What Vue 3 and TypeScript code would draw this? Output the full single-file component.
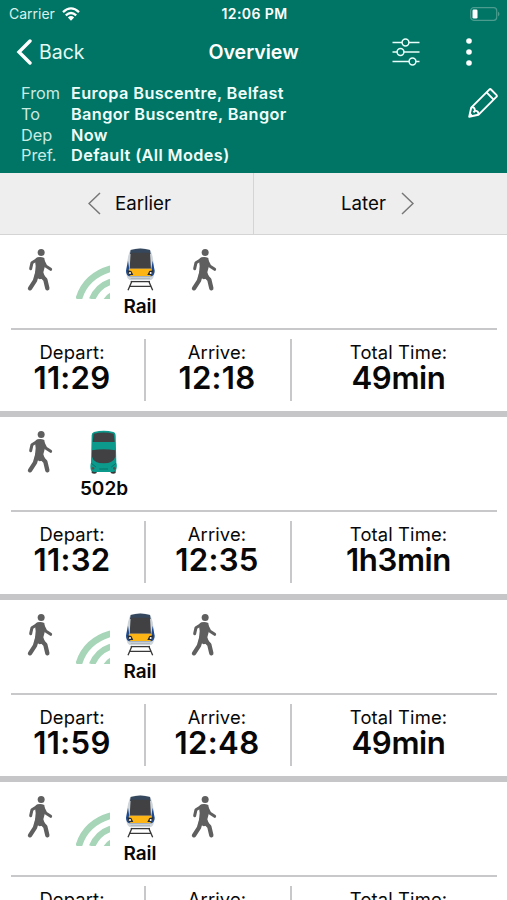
<script setup lang="ts">
type Mode = 'rail' | 'bus'

interface Journey {
  mode: Mode
  label: string
  depart: string
  arrive: string
  total: string
}

const query = [
  { key: 'From', value: 'Europa Buscentre, Belfast' },
  { key: 'To', value: 'Bangor Buscentre, Bangor' },
  { key: 'Dep', value: 'Now' },
  { key: 'Pref.', value: 'Default (All Modes)' },
]

const journeys: Journey[] = [
  { mode: 'rail', label: 'Rail', depart: '11:29', arrive: '12:18', total: '49min' },
  { mode: 'bus', label: '502b', depart: '11:32', arrive: '12:35', total: '1h3min' },
  { mode: 'rail', label: 'Rail', depart: '11:59', arrive: '12:48', total: '49min' },
  { mode: 'rail', label: 'Rail', depart: '12:29', arrive: '13:18', total: '49min' },
]
</script>

<template>
  <main class="screen">
    <svg class="defs" aria-hidden="true">
      <symbol id="walker" viewBox="48 24 81 132">
        <circle cx="93.500" cy="37.500" r="10.500" fill="#5f5f5f" />
        <g fill="none" stroke="#5f5f5f" stroke-linecap="round" stroke-linejoin="round">
          <path d="M84 57L66 68L62 86" stroke-width="9" />
          <path d="M98 60L107 78L122 88" stroke-width="9" />
          <path d="M82 98L75 122L60 145" stroke-width="13" />
          <path d="M90 102L106 119L112 145" stroke-width="13" />
        </g>
        <path d="M78 54Q90 48 103 54L105 78L100 97L106 114L89 118L74 110L77 78L75 62Z" fill="#5f5f5f" />
      </symbol>
    </svg>

    <header class="header">
      <div class="status">
        <div class="carrier">
          <span>Carrier</span>
          <svg class="wifi" viewBox="0 0 18 14">
            <g fill="none" stroke="#fff" stroke-width="2.300">
              <path d="M1 5.200Q9-2.400 17 5.200" />
              <path d="M3.800 8.400Q9 3.600 14.200 8.400" />
            </g>
            <path d="M5.900 10.400Q9 7.600 12.100 10.400L9 13.700Z" fill="#fff" />
          </svg>
        </div>
        <span class="clock">12:06 PM</span>
        <svg class="battery" viewBox="0 0 30 14">
          <rect x=".7" y=".7" width="26" height="12.600" rx="3" fill="none" stroke="#4c9c8f" stroke-width="1.200" />
          <rect x="2.500" y="2.500" width="5" height="9" rx="1.300" fill="#fff" />
          <path d="M28 4.500Q31 7 28 9.500Z" fill="#4c9c8f" />
        </svg>
      </div>

      <nav class="navbar">
        <button class="back" type="button">
          <svg class="back-icon" viewBox="0 0 16 26">
            <path d="M14 2L3 13L14 24" fill="none" stroke="#fff" stroke-width="3.400" stroke-linecap="round" stroke-linejoin="miter" />
          </svg>
          <span>Back</span>
        </button>
        <h1>Overview</h1>
        <div class="actions">
          <svg class="sliders" viewBox="0 0 28 28">
            <g fill="none" stroke="#e9fffb" stroke-width="1.500">
              <path d="M.5 4.500H10M17 4.500H27.500M.5 14H5M12 14H27.500M.5 23.500H17M24 23.500H27.500" />
              <circle cx="13.500" cy="4.500" r="3.400" />
              <circle cx="8.500" cy="14" r="3.400" />
              <circle cx="20.500" cy="23.500" r="3.400" />
            </g>
          </svg>
          <svg class="dots" viewBox="0 0 6 28" fill="#fff">
            <circle cx="3" cy="3" r="2.800" />
            <circle cx="3" cy="14" r="2.800" />
            <circle cx="3" cy="25" r="2.800" />
          </svg>
        </div>
      </nav>

      <section class="query">
        <dl>
          <div v-for="row in query" :key="row.key" class="query-row">
            <dt>{{ row.key }}</dt>
            <dd>{{ row.value }}</dd>
          </div>
        </dl>
        <svg class="pencil" viewBox="0 0 30 30">
          <g fill="none" stroke="#fff" stroke-width="1.900" stroke-linejoin="round">
            <path d="M1.200 28.800L3.200 19.600L21.500 1.300Q22.300 .8 23 1.500L28.600 7.200Q29.200 8 28.600 8.700L10.400 26.800Z" />
            <path d="M3.400 19.400Q6.600 18.600 7 22.600Q11 23 10.400 26.800M18.600 4.400L25.400 11.400M7.200 22.500L5.500 24.300" />
          </g>
          <path d="M1 29L2.200 24.600L5.200 27.900Z" fill="#fff" />
        </svg>
      </section>
    </header>

    <div class="pager">
      <button class="pager-btn earlier" type="button">
        <svg class="chevron" viewBox="0 0 13 23"><path d="M12 1L1 11.500L12 22" /></svg>
        <span>Earlier</span>
      </button>
      <button class="pager-btn later" type="button">
        <span>Later</span>
        <svg class="chevron" viewBox="0 0 13 23"><path d="M1 1L12 11.500L1 22" /></svg>
      </button>
    </div>

    <article v-for="j in journeys" :key="j.depart" class="journey">
      <div class="legs">
        <svg class="walk"><use href="#walker" /></svg>
        <template v-if="j.mode === 'rail'">
          <svg class="live" viewBox="198 75 102 102" fill="none" stroke="#a6d5b8">
            <path d="M206 178Q226 108 302 86" stroke-width="20" />
            <path d="M246 178Q262 139 302 125" stroke-width="19" />
            <path d="M281 177Q288 164 302 157V177Z" fill="#a6d5b8" stroke="none" />
          </svg>
          <div class="leg rail">
            <svg class="vehicle" viewBox="45 24 90 132">
              <path d="M62 29Q91 22 120 29Q129 40 133 92Q134 121 118 121H64Q48 121 49 92Q53 40 62 29Z" fill="#cdd4da" />
              <path d="M54 62L48 92Q48 104 57 109H125Q134 104 134 92L128 62L124 88H58Z" fill="#1d4a90" />
              <path d="M62 30Q91 21 120 30L122 42H60Z" fill="#34475d" />
              <path d="M62 38H120L123 86H59Z" fill="#414143" />
              <path d="M57 86H125L127 96Q126 107 119 108H63Q56 107 55 96Z" fill="#fdb415" />
              <path d="M52 91L64 93L70 105L57 105ZM130 91L118 93L112 105L125 105Z" fill="#242a35" />
              <circle cx="60" cy="99" r="3" fill="#fff" />
              <circle cx="122" cy="99" r="3" fill="#fff" />
              <path d="M62 115H120" stroke="#aab2b9" stroke-width="3" />
              <path d="M66 123L54 151M116 123L128 151M62 125H120M57 139H125" fill="none" stroke="#383838" stroke-width="4" />
            </svg>
            <span class="leg-label">{{ j.label }}</span>
          </div>
          <svg class="walk walk-end"><use href="#walker" /></svg>
        </template>
        <div v-else class="leg bus">
          <svg class="vehicle" viewBox="239 30 90 132">
            <path d="M247 148H262V159Q255 163 247 159ZM304 148H319V159Q312 163 304 159Z" fill="#38383a" />
            <path d="M254 36Q284 28 312 36Q319 38 319 48L321 128Q324 137 321 148Q319 156 309 156H256Q246 156 244 148Q242 136 245 128L247 46Q247 38 254 36Z" fill="#0b9a8c" />
            <path d="M253 41Q283 34 313 41L316 66H250Z" fill="#414143" />
            <path d="M248 91Q283 84 318 91L318 110Q312 129 283 130Q253 129 248 110Z" fill="#414143" />
            <path d="M246 130L260 141M320 130L306 141M270 147H296" stroke="#067469" stroke-width="3" />
            <circle cx="251" cy="145" r="4" fill="#51534f" />
            <circle cx="315" cy="145" r="4" fill="#51534f" />
          </svg>
          <span class="leg-label">{{ j.label }}</span>
        </div>
      </div>
      <div class="times">
        <div class="cell">
          <span class="caption">Depart:</span>
          <strong>{{ j.depart }}</strong>
        </div>
        <div class="cell arrive">
          <span class="caption">Arrive:</span>
          <strong>{{ j.arrive }}</strong>
        </div>
        <div class="cell total">
          <span class="caption">Total Time:</span>
          <strong>{{ j.total }}</strong>
        </div>
      </div>
    </article>
  </main>
</template>

<style>
body {
  margin: 0;
  overflow: hidden;
}
</style>

<style scoped>
* {
  box-sizing: border-box;
}

.screen {
  width: 507px;
  height: 900px;
  overflow: hidden;
  background: #fff;
  color: #080808;
  font-family: Inter, 'Liberation Sans', sans-serif;
}

.defs {
  display: none;
}

svg {
  display: block;
  flex: none;
}

button {
  display: flex;
  align-items: center;
  padding: 0;
  border: 0;
  background: none;
  color: inherit;
  font: inherit;
}

.header {
  height: 173px;
  background: #007565;
  color: #fff;
}

.status {
  display: grid;
  grid-template-columns: 1fr auto 1fr;
  align-items: center;
  height: 27px;
  padding: 0 7px 0 9px;
  font-size: 14px;
}

.carrier {
  display: flex;
  align-items: center;
  gap: 7px;
  color: #d9f1ec;
}

.wifi {
  width: 18px;
  height: 14px;
}

.clock {
  font-weight: 600;
  letter-spacing: 0.4px;
}

.battery {
  width: 30px;
  height: 14px;
  justify-self: end;
}

.navbar {
  display: grid;
  grid-template-columns: 1fr auto 1fr;
  align-items: center;
  height: 50px;
  padding: 0 16px;
}

.back {
  gap: 7px;
  font-size: 19.5px;
  color: #e3faf5;
}

.back-icon {
  width: 16px;
  height: 26px;
}

h1 {
  margin: 0;
  font-size: 19.6px;
  font-weight: 600;
}

.actions {
  display: flex;
  justify-content: flex-end;
  gap: 46px;
  margin-right: 19px;
}

.sliders {
  width: 28px;
  height: 28px;
}

.dots {
  width: 6px;
  height: 28px;
}

.query {
  display: flex;
  justify-content: space-between;
  padding: 6px 9px 0 21px;
}

dl {
  margin: 0;
}

.query-row {
  display: flex;
  height: 20.8px;
  line-height: 20.8px;
  font-size: 16.3px;
}

dt {
  width: 50px;
  color: #c8ebe3;
}

dd {
  margin: 0;
  font-weight: 600;
  letter-spacing: 0.38px;
  color: #f0fffc;
}

.pencil {
  width: 30px;
  height: 30px;
  margin-top: 5px;
}

.pager {
  display: grid;
  grid-template-columns: 254px 253px;
  height: 62px;
  border-bottom: 1.5px solid #d4d4d4;
  background: #eee;
  font-size: 18.7px;
}

.earlier {
  gap: 14px;
  padding-left: 88px;
  border-right: 1.5px solid #d4d4d4;
}

.later {
  gap: 15px;
  padding-left: 87px;
}

.chevron {
  width: 13px;
  height: 23px;
  fill: none;
  stroke: #777;
  stroke-width: 1.5;
}

.journey {
  height: 182.4px;
  padding: 0 10px 0 11px;
  border-bottom: 6px solid #c6c6c8;
}

.legs {
  display: flex;
  height: 95px;
  padding: 13px 0 0 15px;
  border-bottom: 2px solid #c8c8ca;
}

.walk {
  width: 27px;
  height: 44px;
}

.live {
  width: 34px;
  height: 34px;
  margin: 17px 0 0 23px;
}

.leg {
  display: flex;
  flex-direction: column;
  align-items: center;
}

.vehicle {
  width: 30px;
  height: 44px;
}

.rail {
  width: 36px;
  margin-left: 12px;
}

.bus {
  width: 50px;
  margin-left: 26px;
}

.walk-end {
  margin-left: 32px;
}

.leg-label {
  margin-top: 3px;
  font-size: 19px;
  font-weight: 600;
  line-height: 24px;
}

.times {
  display: grid;
  grid-template-columns: 135px 146px 1fr;
  height: 62px;
  margin-top: 9px;
}

.cell {
  display: flex;
  flex-direction: column;
  align-items: center;
  padding-right: 11px;
  border-right: 2px solid #c8c8ca;
}

.cell.arrive {
  padding-right: 2px;
}

.cell.total {
  padding: 0 0 0 8px;
  border-right: 0;
}

.caption {
  font-size: 18.4px;
  line-height: 22px;
  margin-top: 2px;
  letter-spacing: 0.12px;
}

strong {
  font-size: 31.2px;
  font-weight: 600;
  line-height: 30px;
  letter-spacing: 0.3px;
}

.total strong {
  letter-spacing: -0.4px;
}
</style>
